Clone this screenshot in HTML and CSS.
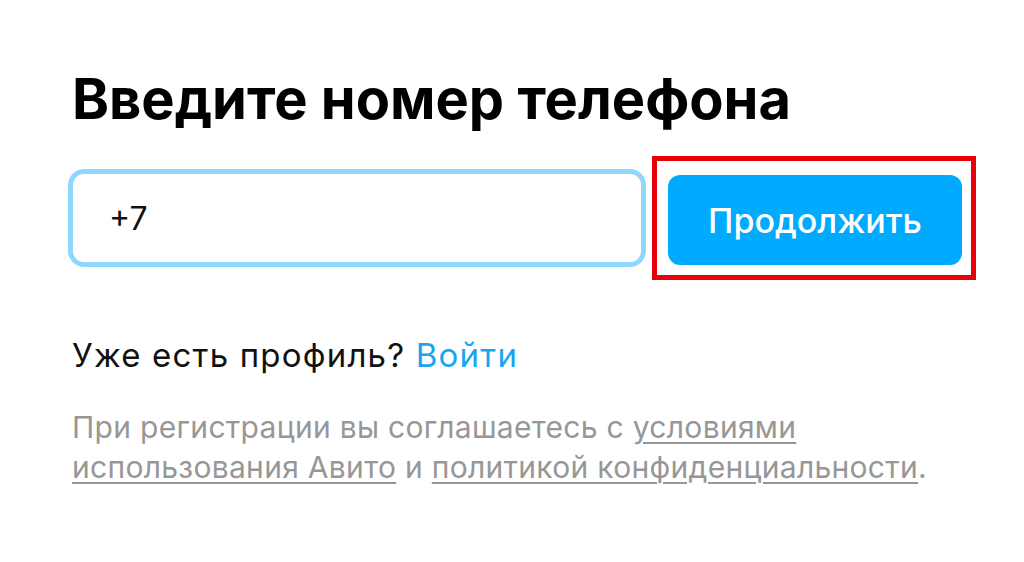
FILE: index.html
```html
<!DOCTYPE html>
<html lang="ru">
<head>
    <meta charset="UTF-8">
    <meta name="viewport" content="width=device-width, initial-scale=1.0">
    <title>Регистрация</title>
    <link rel="stylesheet" href="styles.css">
</head>
<body>
    <div class="page">
        <h1 class="title">Введите номер телефона</h1>

        <div class="phone-row">
            <div class="phone-field">
                <input type="tel" class="phone-input" value="+7">
            </div>
            <div class="highlight">
                <button class="continue-btn">Продолжить</button>
            </div>
        </div>

        <p class="login-line">Уже есть профиль? <a href="#" class="login-link">Войти</a></p>

        <p class="terms">
            При регистрации вы соглашаетесь с <a href="#">условиями использования Авито</a> и <a href="#">политикой конфиденциальности</a>.
        </p>
    </div>
</body>
</html>
```

FILE: styles.css
```css
* {
    margin: 0;
    padding: 0;
    box-sizing: border-box;
}

body {
    font-family: Inter, 'Noto Sans', sans-serif;
    background: #fff;
    color: #000;
}

.page {
    padding: 68px 0 0 72px;
}

.title {
    font-size: 56px;
    font-weight: 700;
    line-height: 62px;
}

.phone-row {
    display: flex;
    align-items: center;
    margin-top: 26px;
    margin-left: -4px;
}

.phone-field {
    width: 578px;
    height: 98px;
    border: 5px solid #8fd8fb;
    border-radius: 16px;
    display: flex;
    align-items: center;
}

.phone-input {
    border: none;
    outline: none;
    width: 100%;
    padding-left: 36px;
    font-family: Inter, sans-serif;
    font-size: 32px;
    color: #111;
    background: transparent;
}

.highlight {
    margin-left: 6px;
    border: 5px solid #e8000b;
    padding: 14px 9px 10px 11px;
}

.continue-btn {
    display: block;
    width: 294px;
    height: 90px;
    border: none;
    border-radius: 12px;
    background: #00aaff;
    color: #fff;
    font-family: Inter, sans-serif;
    font-size: 34px;
    font-weight: 500;
}

.login-line {
    margin-top: 54px;
    font-size: 33px;
    line-height: 42px;
    letter-spacing: 1.2px;
    color: #111;
}

.login-link {
    color: #1aa5f0;
    text-decoration: none;
}

.terms {
    margin-top: 31px;
    max-width: 890px;
    font-size: 30px;
    line-height: 40px;
    letter-spacing: 0.3px;
    color: #979797;
}

.terms a {
    color: #979797;
    text-decoration: underline;
    text-underline-offset: 4px;
    text-decoration-thickness: 2px;
}
```
